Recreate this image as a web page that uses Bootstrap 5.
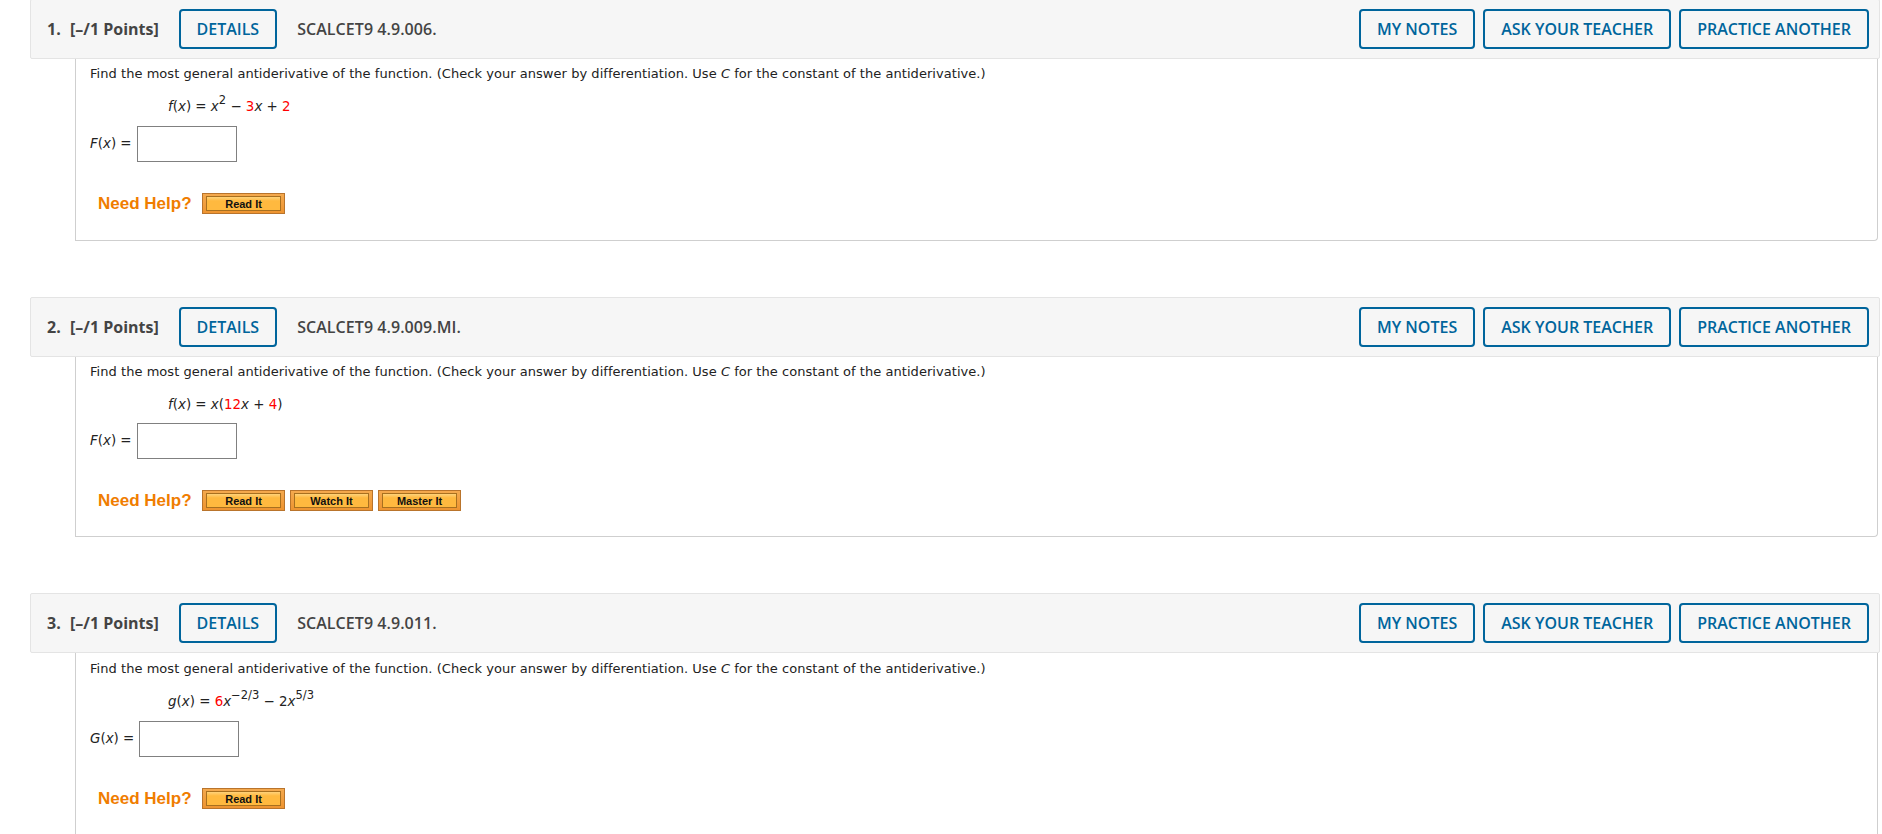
<!DOCTYPE html>
<html lang="en"><head><meta charset="utf-8"><title>Questions</title>
<link rel="stylesheet" href="https://cdn.jsdelivr.net/npm/bootstrap@5.3.0/dist/css/bootstrap.min.css">
<style>
body{background:#fff;margin:0;overflow:hidden}
.qpage{padding:0 2px 0 30px;margin-top:-1px}
.qblock{margin-bottom:56px}
.qhead{height:59.5px;background:#f6f6f6;border:1px solid #e4e4e4;border-radius:2px;padding:0 10px 0 16px;font-family:"Open Sans",sans-serif;font-weight:600;font-size:16px;color:#444}
.qnum{width:23px;font-weight:700}
.qpts{width:109px;font-weight:700}
.qcode{margin-left:20px;letter-spacing:.06px}
.qbtn{height:40px;border:2px solid #00659c;border-radius:4px;background:transparent;color:#00659c;font-family:"Open Sans",sans-serif;font-weight:600;font-size:16px;padding:0 16px;line-height:36px;white-space:nowrap}
.qdet{padding:0 15.5px;margin-right:.5px}
.qbody{margin-left:45px;margin-right:2px;border:1px solid #cfcfcf;border-top:0;border-radius:0 0 4px 0;height:182.5px;padding:5px 0 0 14px;font-family:"DejaVu Sans",sans-serif;font-size:13px;color:#222}
.qmid{height:180.5px}
.qlast{height:240px;border-bottom:0;padding-top:6px}
.qprompt{line-height:20px;letter-spacing:.045px}
.qmath{margin:13px 0 0 78px;line-height:20px;height:20px;font-size:13.4px}
.qmath sup{font-size:11.5px;top:-.55em;line-height:0}
.red{color:#f00}
.qans{margin-top:9px;font-size:13.4px}
.qmid .qans{margin-top:8px}
.qlab{padding-top:2px}
.qinput{width:100px;height:36px;border:1px solid #808080;background:#fff;margin-left:5px}
.qhelp{margin:31px 0 0 8px;gap:5px}
.qneed{font-family:"Liberation Sans",sans-serif;font-weight:700;font-size:17px;color:#f07d00;margin-right:5.5px;line-height:21px}
.qres{width:83px;height:21px;background:linear-gradient(#f4a94e,#ee9430);border:1px solid #b9742c;padding:2px 3px;display:flex;text-decoration:none}
.qres span{flex:1;border:1px solid #a8701f;background:linear-gradient(#ffd27a,#ffb93f 30%);font-family:"Liberation Sans",sans-serif;font-weight:700;font-size:11px;color:#111;text-align:center;line-height:14px}
</style></head><body>
<main class="qpage">
<section class="qblock">
<div class="qhead d-flex align-items-center"><span class="qnum">1.</span><span class="qpts">[–/1 Points]</span><button class="qbtn qdet">DETAILS</button><span class="qcode">SCALCET9 4.9.006.</span><div class="ms-auto d-flex gap-2"><button class="qbtn">MY NOTES</button><button class="qbtn">ASK YOUR TEACHER</button><button class="qbtn">PRACTICE ANOTHER</button></div></div>
<div class="qbody">
<div class="qprompt">Find the most general antiderivative of the function. (Check your answer by differentiation. Use <i>C</i> for the constant of the antiderivative.)</div>
<div class="qmath"><i>f</i>(<i>x</i>) = <i>x</i><sup>2</sup> − <span class="red">3</span><i>x</i> + <span class="red">2</span></div>
<div class="qans d-flex align-items-center"><span class="qlab"><i>F</i>(<i>x</i>) =</span><span class="qinput"></span></div>
<div class="qhelp d-flex align-items-center"><span class="qneed">Need Help?</span><a class="qres"><span>Read It</span></a></div>
</div></section>
<section class="qblock">
<div class="qhead d-flex align-items-center"><span class="qnum">2.</span><span class="qpts">[–/1 Points]</span><button class="qbtn qdet">DETAILS</button><span class="qcode">SCALCET9 4.9.009.MI.</span><div class="ms-auto d-flex gap-2"><button class="qbtn">MY NOTES</button><button class="qbtn">ASK YOUR TEACHER</button><button class="qbtn">PRACTICE ANOTHER</button></div></div>
<div class="qbody qmid">
<div class="qprompt">Find the most general antiderivative of the function. (Check your answer by differentiation. Use <i>C</i> for the constant of the antiderivative.)</div>
<div class="qmath"><i>f</i>(<i>x</i>) = <i>x</i>(<span class="red">12</span><i>x</i> + <span class="red">4</span>)</div>
<div class="qans d-flex align-items-center"><span class="qlab"><i>F</i>(<i>x</i>) =</span><span class="qinput"></span></div>
<div class="qhelp d-flex align-items-center"><span class="qneed">Need Help?</span><a class="qres"><span>Read It</span></a><a class="qres"><span>Watch It</span></a><a class="qres"><span>Master It</span></a></div>
</div></section>
<section class="qblock">
<div class="qhead d-flex align-items-center"><span class="qnum">3.</span><span class="qpts">[–/1 Points]</span><button class="qbtn qdet">DETAILS</button><span class="qcode">SCALCET9 4.9.011.</span><div class="ms-auto d-flex gap-2"><button class="qbtn">MY NOTES</button><button class="qbtn">ASK YOUR TEACHER</button><button class="qbtn">PRACTICE ANOTHER</button></div></div>
<div class="qbody qlast">
<div class="qprompt">Find the most general antiderivative of the function. (Check your answer by differentiation. Use <i>C</i> for the constant of the antiderivative.)</div>
<div class="qmath"><i>g</i>(<i>x</i>) = <span class="red">6</span><i>x</i><sup>−2/3</sup> − 2<i>x</i><sup>5/3</sup></div>
<div class="qans d-flex align-items-center"><span class="qlab"><i>G</i>(<i>x</i>) =</span><span class="qinput"></span></div>
<div class="qhelp d-flex align-items-center"><span class="qneed">Need Help?</span><a class="qres"><span>Read It</span></a></div>
</div></section>
</main>
</body></html>
